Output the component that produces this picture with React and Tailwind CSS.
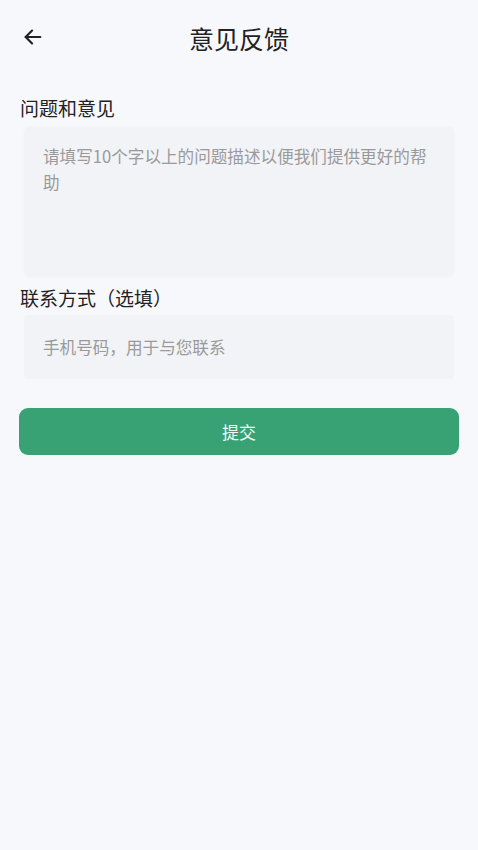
export default function App() {
  return (
    <div
      className="min-h-[850px] w-full bg-[#f7f8fc] text-[#222]"
      style={{ fontFamily: '"Noto Sans CJK SC", "Noto Sans", sans-serif' }}
    >
      <header className="relative flex h-[76px] items-center justify-center">
        <button className="absolute left-[22px] top-[26px] text-[#222]">
          <svg width="22" height="22" viewBox="0 0 24 24" fill="none" stroke="currentColor" strokeWidth="2.4" strokeLinecap="round" strokeLinejoin="round">
            <path d="M20 12H4" />
            <path d="M11 5l-7 7 7 7" />
          </svg>
        </button>
        <h1 className="text-[25px] leading-none font-normal text-[#222]">意见反馈</h1>
      </header>

      <main className="px-[19px] pt-[19px]">
        <label className="block pl-[1px] text-[19px] leading-[26px] text-[#222]">问题和意见</label>
        <div className="mt-[6px] mx-[5px] h-[150px] rounded-[6px] bg-[#f2f3f7] pl-[19px] pr-[12px] pt-[16px] shadow-[0_0_3px_rgba(0,0,0,0.03)]">
          <p className="text-[16.6px] leading-[26px] text-[#9a9a9a]">
            请填写10个字以上的问题描述以便我们提供更好的帮助
          </p>
        </div>

        <label className="mt-[8px] block pl-[1px] text-[19px] leading-[26px] text-[#222]">联系方式（选填）</label>
        <div className="mt-[4px] mx-[5px] flex h-[64px] items-center rounded-[4px] bg-[#f2f3f7] px-[19px]">
          <span className="text-[16.6px] text-[#9a9a9a]">手机号码，用于与您联系</span>
        </div>

        <button className="mt-[29px] flex h-[47px] w-full items-center justify-center rounded-[9px] bg-[#38a275] text-[17px] text-[#f1f8f4]">
          提交
        </button>
      </main>
    </div>
  );
}
